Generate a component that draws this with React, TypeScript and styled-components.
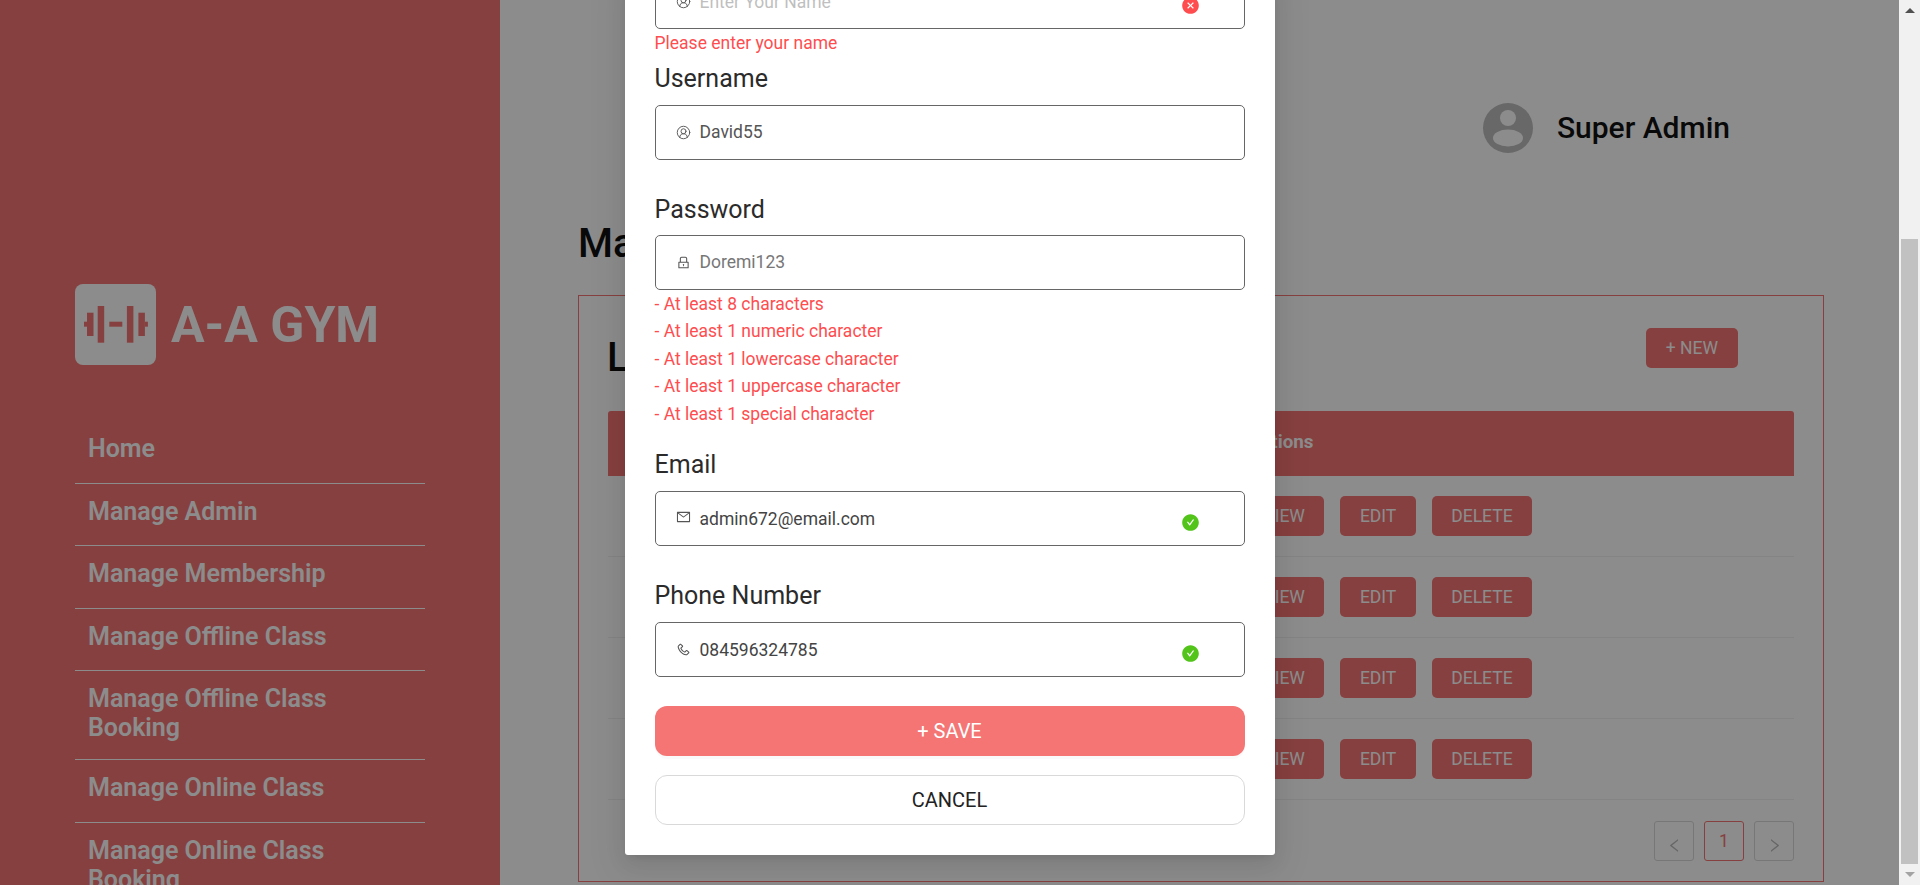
import styled, { createGlobalStyle } from 'styled-components'
import { CircleUserRound } from 'lucide-react'
import {
  AiOutlineLock,
  AiOutlineMail,
  AiOutlinePhone,
  AiFillCheckCircle,
  AiFillCloseCircle,
  AiOutlineLeft,
  AiOutlineRight,
} from 'react-icons/ai'
import type { ReactNode } from 'react'

const RED = '#f47574'

const GlobalStyle = createGlobalStyle`
  * { box-sizing: border-box; }
  html, body { margin: 0; padding: 0; height: 100%; overflow: hidden; }
  body { font-family: Roboto, "Liberation Sans", sans-serif; background: #fff; }
`

const Window = styled.div`
  display: flex;
  width: 1920px;
  height: 885px;
  overflow: hidden;
`

const Viewport = styled.div`
  position: relative;
  flex: 1;
  display: flex;
  min-width: 0;
  overflow: hidden;
`

const Sidebar = styled.aside`
  flex: 0 0 500px;
  height: 885px;
  padding: 284px 75px 0;
  background: ${RED};
  color: #fff;
  overflow: hidden;
`

const Brand = styled.div`
  display: flex;
  align-items: center;
  gap: 15px;
  margin-bottom: 56px;
`

const LogoMark = styled.svg`
  display: block;
  width: 81px;
  height: 81px;
  flex: none;
`

const BrandName = styled.span`
  font-size: 50px;
  font-weight: 700;
  line-height: 1;
  white-space: nowrap;
`

const NavItem = styled.a`
  display: block;
  min-height: 62.5px;
  padding: 13px 60px 17px 13px;
  border-bottom: 1px solid #fff;
  font-size: 25px;
  font-weight: 600;
  line-height: 29px;
`

const Main = styled.main`
  flex: 1;
  min-width: 0;
  padding: 103px 75px 0 78px;
`

const ProfileRow = styled.div`
  display: flex;
  justify-content: flex-end;
  align-items: center;
  gap: 24px;
  height: 50px;
  padding-right: 94px;
`

const ProfileName = styled.span`
  margin-bottom: 2px;
  font-size: 30px;
  font-weight: 500;
  color: #111;
`

const PageTitle = styled.h1`
  margin: 67px 0 27px;
  font-size: 40px;
  font-weight: 500;
  line-height: 48px;
  color: #111;
`

const Card = styled.section`
  padding: 32px 29px 20px;
  border: 1px solid ${RED};
`

const CardHead = styled.div`
  display: flex;
  justify-content: space-between;
  align-items: flex-start;
  height: 83px;
`

const CardTitle = styled.h2`
  margin: 6px 0 0 -1px;
  font-size: 40px;
  font-weight: 500;
  line-height: 48px;
  color: #111;
`

const Button = styled.button`
  height: 40px;
  padding: 0 19.5px;
  border: 0;
  border-radius: 5px;
  background: ${RED};
  color: #fff;
  font-family: inherit;
  font-size: 17.5px;
  line-height: 40px;
  white-space: nowrap;
`

const NewButton = styled(Button)`
  padding: 0 20px;
  margin-right: 56px;
`

const TableHead = styled.div`
  display: grid;
  grid-template-columns: 1fr 545px;
  align-items: center;
  height: 65px;
  padding-bottom: 4px;
  border-radius: 3px 3px 0 0;
  background: ${RED};
  color: #fff;
  font-size: 18.75px;
  font-weight: 700;
`

const TableRow = styled.div`
  display: grid;
  grid-template-columns: 1fr 550px;
  height: 81px;
  padding: 20px 0;
  border-bottom: 1px solid #f0f0f0;
`

const Actions = styled.div`
  display: flex;
  gap: 16px;
`

const Pagination = styled.nav`
  display: flex;
  justify-content: flex-end;
  gap: 10px;
  margin-top: 21px;
`

const PageButton = styled.span<{ $active?: boolean }>`
  display: flex;
  align-items: center;
  justify-content: center;
  width: 40px;
  height: 40px;
  border: 1px solid ${p => (p.$active ? RED : '#d9d9d9')};
  border-radius: 3px;
  color: ${p => (p.$active ? RED : '#bbb')};
  font-size: 17.5px;

  svg { margin-top: 8px; }
`

const Overlay = styled.div`
  position: absolute;
  inset: 0;
  display: flex;
  justify-content: center;
  align-items: flex-end;
  padding-bottom: 30px;
  background: rgba(0, 0, 0, 0.45);
  overflow: hidden;
`

const Modal = styled.div`
  flex: 0 0 650px;
  padding: 0 30px 30px;
  border-radius: 3px;
  background: #fff;
  box-shadow: 0 7px 20px rgba(0, 0, 0, 0.08), 0 4px 8px -5px rgba(0, 0, 0, 0.12), 0 11px 35px 10px rgba(0, 0, 0, 0.05);
`

const Field = styled.div<{ $gap?: number }>`
  margin-top: ${p => p.$gap ?? 0}px;
`

const Label = styled.label<{ $below?: number }>`
  display: block;
  margin-bottom: ${p => p.$below ?? 12}px;
  font-size: 25px;
  line-height: 28px;
  color: #2b2b2b;
`

const InputBox = styled.div`
  display: flex;
  align-items: center;
  height: 55px;
  padding: 0 44px 0 20px;
  border: 1px solid #666;
  border-radius: 5px;
  font-size: 17.5px;
`

const InputIcon = styled.span<{ $up?: number }>`
  display: flex;
  justify-content: center;
  width: 15px;
  margin: -${p => p.$up ?? 0}px 9px 0 0;
  color: #555;
`

const InputText = styled.span<{ $tone: string }>`
  flex: 1;
  color: ${p => p.$tone};
`

const Feedback = styled.span<{ $ok: boolean }>`
  display: flex;
  margin-top: 8px;
  color: ${p => (p.$ok ? '#52c41a' : '#ff4d4f')};
`

const ErrorLines = styled.div`
  margin-top: 1px;
  font-size: 17.5px;
  line-height: 27.5px;
  color: #ff4d4f;
`

const SaveButton = styled.button`
  display: block;
  width: 100%;
  height: 50px;
  margin-top: 29px;
  border: 0;
  border-radius: 12px;
  background: ${RED};
  color: #fff;
  font-family: inherit;
  font-size: 20px;
  box-shadow: 0 3px 0 rgba(0, 0, 0, 0.02);
`

const CancelButton = styled.button`
  display: block;
  width: 100%;
  height: 50px;
  margin-top: 19px;
  border: 1px solid #d9d9d9;
  border-radius: 12px;
  background: #fff;
  color: #222;
  font-family: inherit;
  font-size: 20px;
`

const Scrollbar = styled.div`
  flex: 0 0 21px;
  display: flex;
  flex-direction: column;
  background: #f1f1f1;
`

const ScrollArrow = styled.div<{ $down?: boolean }>`
  flex: 0 0 21px;
  display: flex;
  align-items: center;
  justify-content: center;

  &::before {
    content: '';
    border-left: 5px solid transparent;
    border-right: 5px solid transparent;
    ${p => (p.$down ? 'border-top: 5px solid #a3a3a3;' : 'border-bottom: 5px solid #505050;')}
  }
`

const ScrollTrack = styled.div`
  flex: 1;
  display: flex;
  padding: 218px 2px 0;
`

const ScrollThumb = styled.div`
  flex: 1;
  background: #c1c1c1;
`

const navItems = [
  'Home',
  'Manage Admin',
  'Manage Membership',
  'Manage Offline Class',
  'Manage Offline Class Booking',
  'Manage Online Class',
  'Manage Online Class Booking',
]

const passwordRules = [
  '- At least 8 characters',
  '- At least 1 numeric character',
  '- At least 1 lowercase character',
  '- At least 1 uppercase character',
  '- At least 1 special character',
]

const Input = ({ icon, text, tone, up, ok }: { icon: ReactNode; text: string; tone: string; up?: number; ok?: boolean }) => (
  <InputBox>
    <InputIcon $up={up}>{icon}</InputIcon>
    <InputText $tone={tone}>{text}</InputText>
    {ok !== undefined && (
      <Feedback $ok={ok}>{ok ? <AiFillCheckCircle size={19} /> : <AiFillCloseCircle size={19} />}</Feedback>
    )}
  </InputBox>
)

const App = () => {
  const userIcon = <CircleUserRound size={15} strokeWidth={1.5} />

  return (
    <>
      <GlobalStyle />
      <Window>
        <Viewport>
          <Sidebar>
            <Brand>
              <LogoMark viewBox="0 0 81 81">
                <rect width="81" height="81" rx="8" fill="#fff" />
                <g fill={RED}>
                  <rect x="9" y="37.7" width="3" height="5" />
                  <rect x="12" y="28.7" width="6.5" height="23.3" />
                  <rect x="22.7" y="22" width="6.5" height="36.7" />
                  <rect x="34.3" y="37.7" width="13" height="5" />
                  <rect x="51.9" y="22" width="6.5" height="36.7" />
                  <rect x="63.4" y="28.7" width="6.5" height="23.3" />
                  <rect x="69.9" y="37.7" width="3" height="5" />
                </g>
              </LogoMark>
              <BrandName>A-A GYM</BrandName>
            </Brand>
            <nav>
              {navItems.map(item => (
                <NavItem key={item}>{item}</NavItem>
              ))}
            </nav>
          </Sidebar>

          <Main>
            <ProfileRow>
              <svg width="50" height="50" viewBox="0 0 50 50">
                <circle cx="25" cy="25" r="25" fill="#bdbdbd" />
                <circle cx="25" cy="15" r="8" fill="#fff" />
                <ellipse cx="25" cy="35" rx="15" ry="8.5" fill="#fff" />
              </svg>
              <ProfileName>Super Admin</ProfileName>
            </ProfileRow>
            <PageTitle>Manage Admin</PageTitle>
            <Card>
              <CardHead>
                <CardTitle>List Admin</CardTitle>
                <NewButton>+ NEW</NewButton>
              </CardHead>
              <TableHead>
                <span />
                <span>Actions</span>
              </TableHead>
              {[0, 1, 2, 3].map(row => (
                <TableRow key={row}>
                  <span />
                  <Actions>
                    <Button>VIEW</Button>
                    <Button>EDIT</Button>
                    <Button>DELETE</Button>
                  </Actions>
                </TableRow>
              ))}
              <Pagination>
                <PageButton><AiOutlineLeft size={17} /></PageButton>
                <PageButton $active>1</PageButton>
                <PageButton><AiOutlineRight size={17} /></PageButton>
              </Pagination>
            </Card>
          </Main>

          <Overlay>
            <Modal>
              <Input icon={userIcon} text="Enter Your Name" tone="#bfbfbf" ok={false} />
              <ErrorLines>Please enter your name</ErrorLines>
              <Field $gap={7}>
                <Label>Username</Label>
                <Input icon={userIcon} text="David55" tone="#555" />
              </Field>
              <Field $gap={36}>
                <Label $below={11}>Password</Label>
                <Input icon={<AiOutlineLock size={17} />} text="Doremi123" tone="#777" />
              </Field>
              <ErrorLines>
                {passwordRules.map(rule => (
                  <div key={rule}>{rule}</div>
                ))}
              </ErrorLines>
              <Field $gap={23}>
                <Label>Email</Label>
                <Input icon={<AiOutlineMail size={18} />} text="admin672@email.com" tone="#444" up={3} ok />
              </Field>
              <Field $gap={36}>
                <Label>Phone Number</Label>
                <Input icon={<AiOutlinePhone size={19} style={{ transform: 'scaleX(-1)' }} />} text="084596324785" tone="#444" up={1} ok />
              </Field>
              <SaveButton>+ SAVE</SaveButton>
              <CancelButton>CANCEL</CancelButton>
            </Modal>
          </Overlay>
        </Viewport>

        <Scrollbar>
          <ScrollArrow />
          <ScrollTrack>
            <ScrollThumb />
          </ScrollTrack>
          <ScrollArrow $down />
        </Scrollbar>
      </Window>
    </>
  )
}

export default App
